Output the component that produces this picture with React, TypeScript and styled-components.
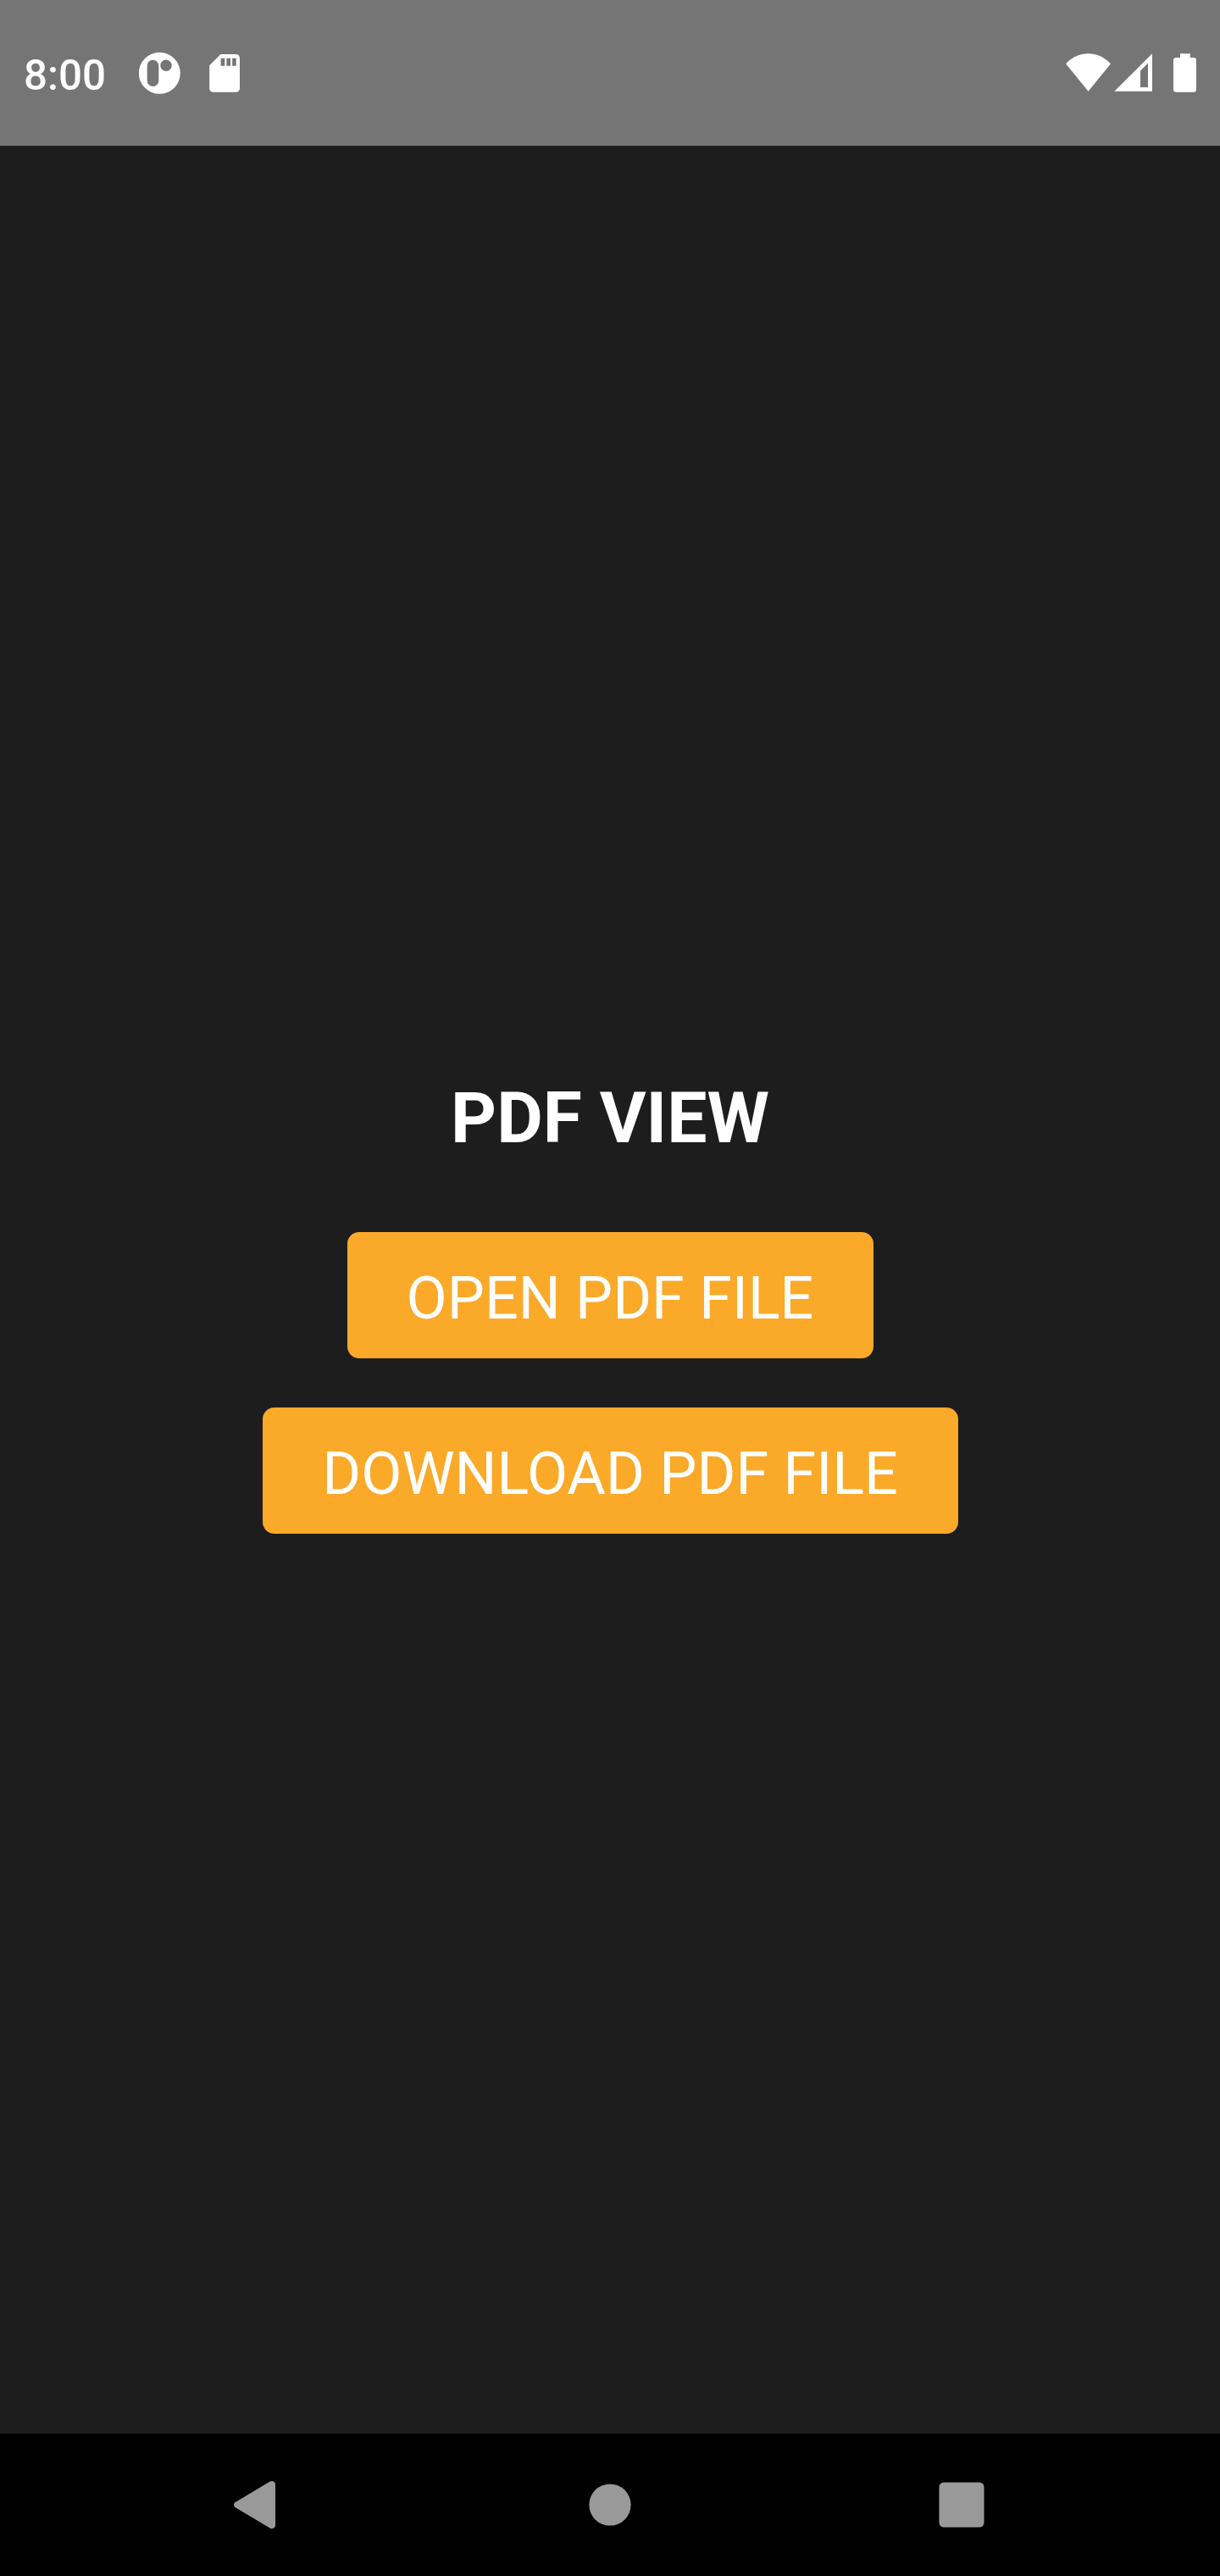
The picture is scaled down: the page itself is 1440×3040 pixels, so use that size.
import React from "react";
import styled, { createGlobalStyle } from "styled-components";

const GlobalStyle = createGlobalStyle`
  *, *::before, *::after { box-sizing: border-box; }
  html, body { margin: 0; padding: 0; background: #1d1d1d; }
`;

const Screen = styled.div`
  display: flex;
  flex-direction: column;
  width: 1440px;
  height: 3040px;
  background: #1d1d1d;
  color: #ffffff;
  font-family: Roboto, "Liberation Sans", sans-serif;
  overflow: hidden;
`;

const StatusBar = styled.header`
  display: flex;
  flex: none;
  justify-content: space-between;
  height: 172px;
  padding: 57px 28px 0;
  background: #757575;
`;

const StatusGroup = styled.div`
  display: flex;
  align-items: flex-start;
  height: 58px;
`;

const Clock = styled.span`
  width: 136px;
  padding-top: 3px;
  font-size: 49.3px;
  font-weight: 500;
  line-height: 58px;
  white-space: nowrap;
`;

const StatusIcon = styled.svg<{ $width: number; $gap?: number }>`
  display: block;
  flex: none;
  width: ${(p) => p.$width}px;
  height: 58px;
  margin-left: ${(p) => p.$gap ?? 0}px;
  fill: #ffffff;
`;

const Content = styled.main`
  display: flex;
  flex: 1;
  flex-direction: column;
  align-items: center;
  padding-top: 1098px;
`;

const Title = styled.h1`
  margin: 0 0 85px;
  font-size: 84px;
  font-weight: 700;
  line-height: 99px;
  white-space: nowrap;
`;

const ActionButton = styled.button<{ $width: number }>`
  display: block;
  width: ${(p) => p.$width}px;
  height: 149px;
  margin: 0 0 58px;
  padding: 37px 0 30px;
  border: 0;
  border-radius: 14px;
  background: #fba928;
  color: #ffffff;
  font-family: inherit;
  font-size: 70px;
  font-weight: 400;
  line-height: 82px;
  text-align: center;
  white-space: nowrap;
`;

const NavBar = styled.nav`
  display: flex;
  flex: none;
  align-items: center;
  justify-content: space-between;
  height: 168px;
  padding: 0 265px;
  background: #000000;
`;

const NavIcon = styled.svg`
  display: block;
  width: 80px;
  height: 80px;
  fill: #999999;
`;

export default function App() {
  return (
    <>
      <GlobalStyle />
      <Screen>
        <StatusBar>
          <StatusGroup>
            <Clock>8:00</Clock>
            <StatusIcon $width={49} viewBox="164 57 49 58">
              <path
                fillRule="evenodd"
                d="M188.3 61.8a24.5 24.5 0 1 1 0 49a24.5 24.5 0 1 1 0-49zM180.5 70.7a6.8 6.8 0 0 0-6.8 6.8v17.7a6.8 6.8 0 0 0 13.6 0V77.5a6.8 6.8 0 0 0-6.8-6.8zM196 70.6a6.7 6.7 0 1 0 0 13.4a6.7 6.7 0 1 0 0-13.4z"
              />
            </StatusIcon>
            <StatusIcon $width={36} $gap={34} viewBox="247 57 36 58">
              <path
                fillRule="evenodd"
                d="M260.5 64H278.6a4.4 4.4 0 0 1 4.4 4.4V104.3a4.4 4.4 0 0 1-4.4 4.4H251.6a4.4 4.4 0 0 1-4.4-4.4V77.3zM260.6 68.7V77.7H265.3V68.7zM267.4 68.7V77.7H272V68.7zM274.2 68.7V77.7H278.7V68.7z"
              />
            </StatusIcon>
          </StatusGroup>
          <StatusGroup>
            <StatusIcon $width={54} viewBox="1258 57 54 58">
              <path d="M1258 75.2C1265.3 67.5 1274.5 63.2 1284.5 63.2S1303.7 67.5 1311 75.2L1284.5 107.7z" />
            </StatusIcon>
            <StatusIcon $width={45} $gap={3} viewBox="1315 57 45 58">
              <path
                fillRule="evenodd"
                d="M1315.3 107.8L1360 63.2V107.8zM1346 83.5V103H1355V74.5z"
              />
            </StatusIcon>
            <StatusIcon $width={27} $gap={25} viewBox="1385 57 27 58">
              <path d="M1393 63.2H1404.8V68H1409a3 3 0 0 1 3 3V105.8a3 3 0 0 1-3 3H1388a3 3 0 0 1-3-3V71a3 3 0 0 1 3-3H1393z" />
            </StatusIcon>
          </StatusGroup>
        </StatusBar>
        <Content>
          <Title>PDF VIEW</Title>
          <ActionButton $width={621}>OPEN PDF FILE</ActionButton>
          <ActionButton $width={821}>DOWNLOAD PDF FILE</ActionButton>
        </Content>
        <NavBar>
          <NavIcon viewBox="265 2916 80 80">
            <path d="M277.2 2953.3L318.7 2928.6Q321 2927.3 323.5 2928.7Q325 2929.8 325 2932V2980Q325 2982.2 323.5 2983.3Q321 2984.7 318.7 2983.4L277.2 2958.7Q274.8 2956 277.2 2953.3z" />
          </NavIcon>
          <NavIcon viewBox="680 2916 80 80">
            <circle cx="720" cy="2956" r="24.6" />
          </NavIcon>
          <NavIcon viewBox="1095 2916 80 80">
            <rect x="1108.5" y="2929.5" width="53" height="53" rx="5.5" />
          </NavIcon>
        </NavBar>
      </Screen>
    </>
  );
}
